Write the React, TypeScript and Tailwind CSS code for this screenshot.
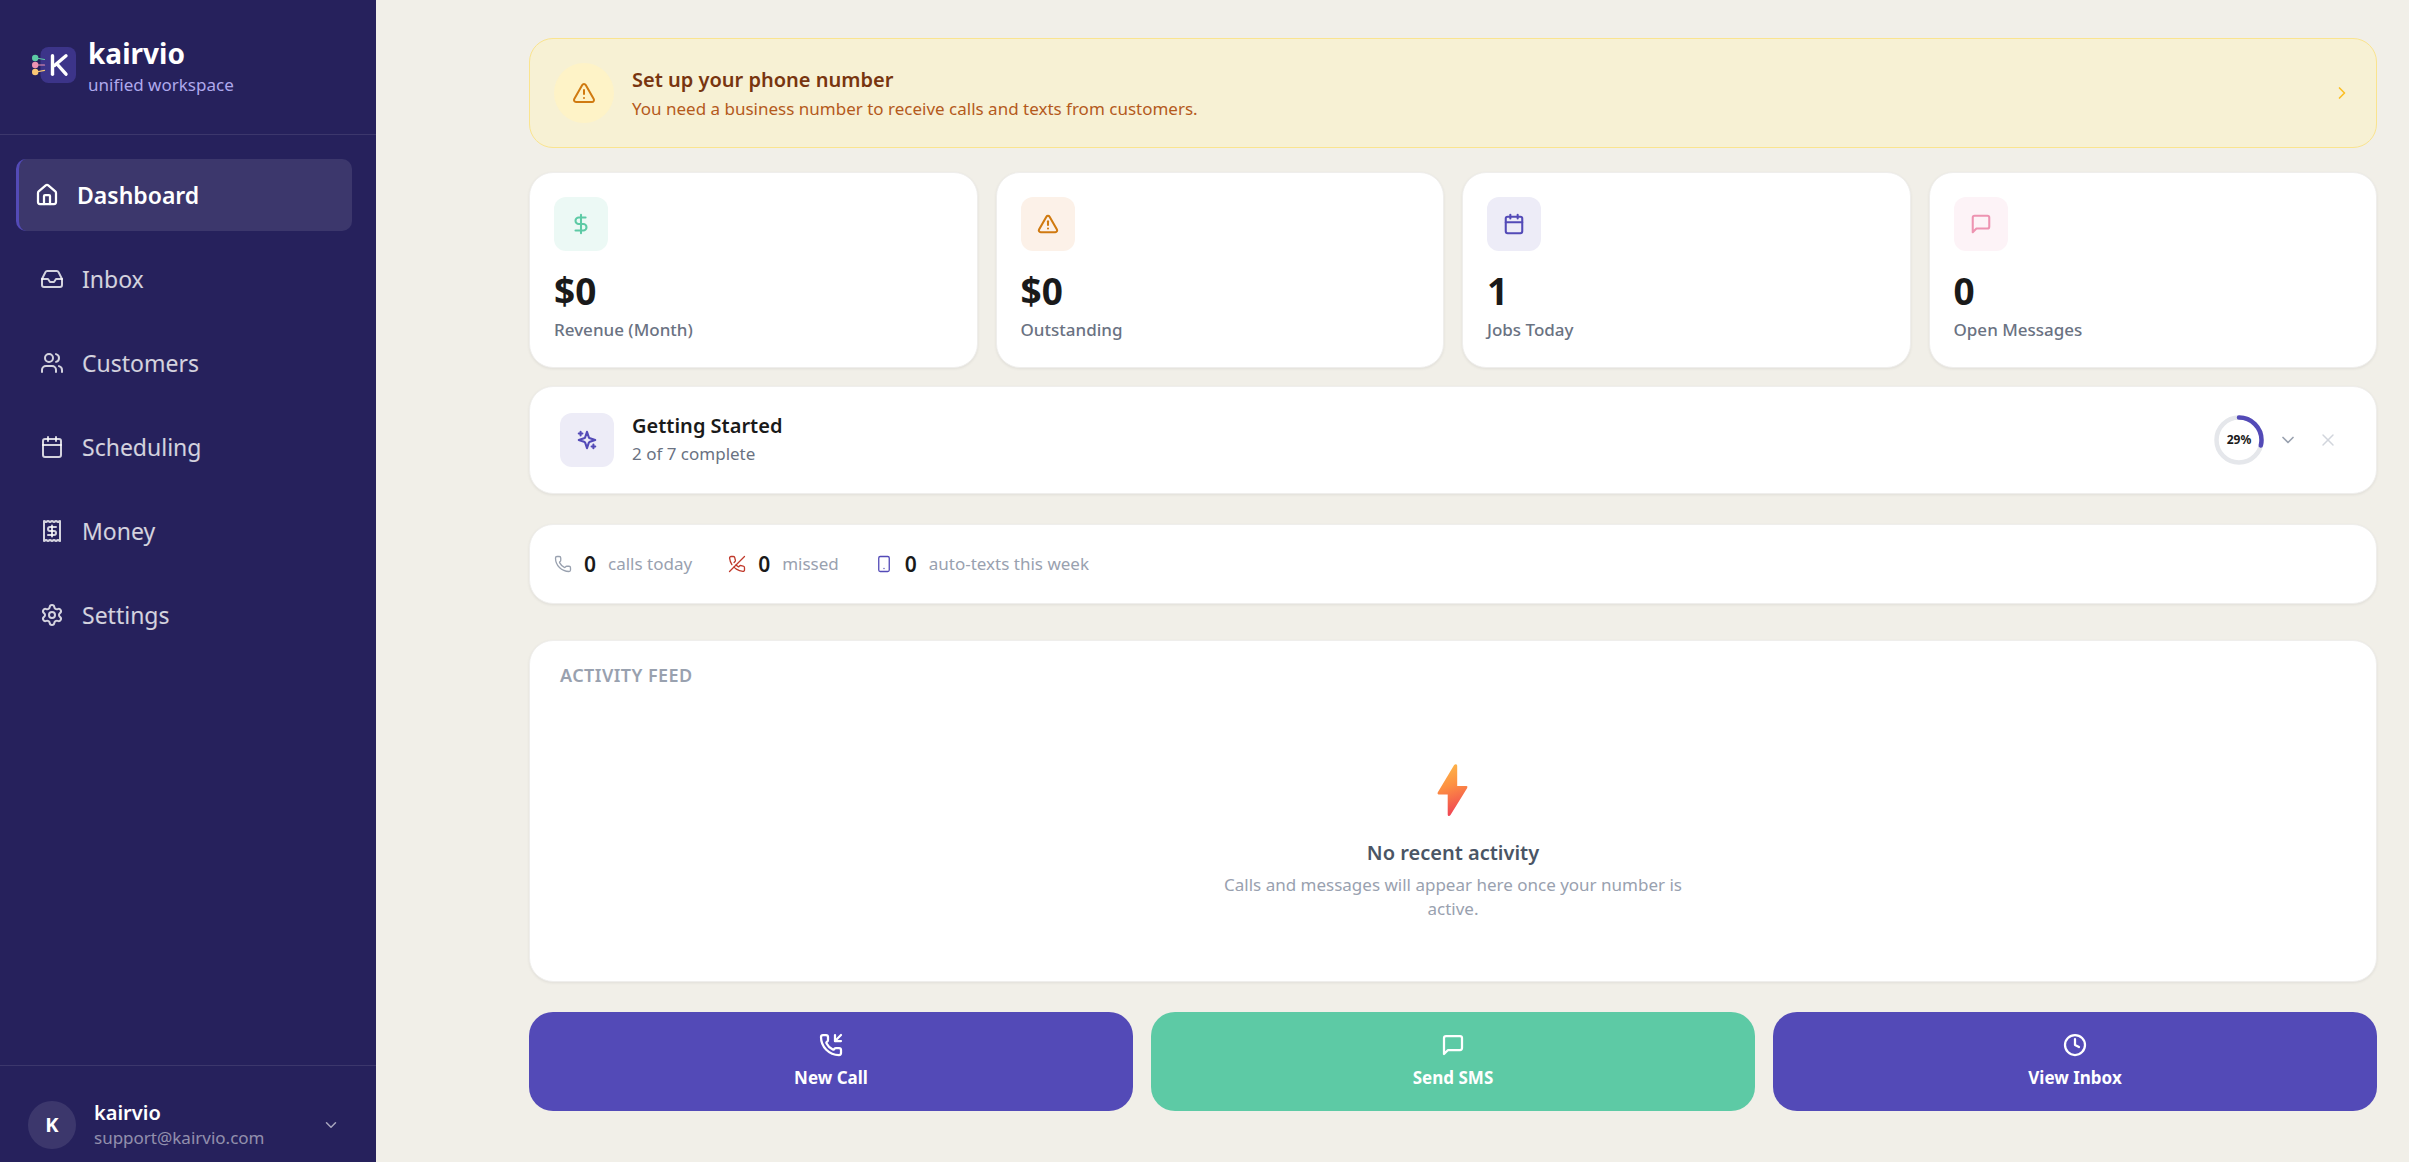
import type { ReactNode } from 'react';
import {
  Calendar,
  ChevronDown,
  ChevronRight,
  Clock,
  DollarSign,
  House,
  Inbox,
  Phone,
  PhoneIncoming,
  Settings,
  Smartphone,
  TriangleAlert,
  Users,
  X,
} from 'lucide-react';

const CARD = 'rounded-3xl border border-[#efeeec] bg-white shadow-[0_1px_3px_rgba(0,0,0,0.07)]';

type IconProps = { size?: number; strokeWidth?: number; className?: string };

function LineIcon({ size = 24, strokeWidth = 2, className, children }: IconProps & { children: ReactNode }) {
  return (
    <svg
      className={className}
      width={size}
      height={size}
      viewBox="0 0 24 24"
      fill="none"
      stroke="currentColor"
      strokeWidth={strokeWidth}
      strokeLinejoin="round"
      strokeLinecap="round"
      aria-hidden="true"
    >
      {children}
    </svg>
  );
}

function ReceiptIcon(props: IconProps) {
  return (
    <LineIcon {...props}>
      <path d="M4 2v20l2-1 2 1 2-1 2 1 2-1 2 1 2-1 2 1V2l-2 1-2-1-2 1-2-1-2 1-2-1-2 1Z" />
      <path d="M16 8h-6a2 2 0 1 0 0 4h4a2 2 0 1 1 0 4H8" />
      <path d="M12 17.5v-11" />
    </LineIcon>
  );
}

function MessageIcon(props: IconProps) {
  return (
    <LineIcon {...props}>
      <path d="M21 15a2 2 0 0 1-2 2H7l-4 4V5a2 2 0 0 1 2-2h14a2 2 0 0 1 2 2z" />
    </LineIcon>
  );
}

function SparklesIcon(props: IconProps) {
  return (
    <LineIcon {...props}>
      <path d="m12 3-1.912 5.813a2 2 0 0 1-1.275 1.275L3 12l5.813 1.912a2 2 0 0 1 1.275 1.275L12 21l1.912-5.813a2 2 0 0 1 1.275-1.275L21 12l-5.813-1.912a2 2 0 0 1-1.275-1.275L12 3Z" />
      <path d="M5 3v4M19 17v4M3 5h4M17 19h4" />
    </LineIcon>
  );
}

function MissedCallIcon(props: IconProps) {
  return (
    <LineIcon {...props}>
      <path d="M10.68 13.31a16 16 0 0 0 3.41 2.6l1.27-1.27a2 2 0 0 1 2.11-.45 12.84 12.84 0 0 0 2.81.7 2 2 0 0 1 1.72 2v3a2 2 0 0 1-2.18 2 19.79 19.79 0 0 1-8.63-3.07 19.42 19.42 0 0 1-3.33-2.67m-2.67-3.34a19.79 19.79 0 0 1-3.07-8.63A2 2 0 0 1 4.11 2h3a2 2 0 0 1 2 1.72 12.84 12.84 0 0 0 .7 2.81 2 2 0 0 1-.45 2.11L8.09 9.91" />
      <path d="M22 2L2 22" />
    </LineIcon>
  );
}

function Logo() {
  return (
    <svg className="h-9 w-11 shrink-0" viewBox="0 0 44 36" fill="none" aria-hidden="true">
      <rect x="8.500" width="35.500" height="36" rx="8" fill="#3C3489" />
      <g strokeWidth="1.200" strokeLinecap="round">
        <path d="M4 11l8.500 1.500" stroke="#5DCAA5" />
        <path d="M4 18h8.500" stroke="#ED93B1" />
        <path d="M4 25l8.500-1.700" stroke="#FAC775" />
      </g>
      <circle cx="3.200" cy="11" r="3.200" fill="#5DCAA5" />
      <circle cx="3.200" cy="18" r="3.200" fill="#ED93B1" />
      <circle cx="3.200" cy="25" r="3.200" fill="#FAC775" />
      <g stroke="#fff" strokeWidth="3.400" strokeLinecap="round">
        <path d="M20.500 8.800v18.400" />
        <path d="M34 8.800L22.500 18.500" />
        <path d="M25 17l9 10.200" />
      </g>
    </svg>
  );
}

function Bolt() {
  return (
    <svg className="h-[54px] w-8" viewBox="0 0 32 54" aria-hidden="true">
      <defs>
        <linearGradient id="bolt" x1="0.400" y1="0" x2="0.600" y2="1">
          <stop offset="0" stopColor="#FDB54A" />
          <stop offset="0.400" stopColor="#FD9042" />
          <stop offset="1" stopColor="#EF3F55" />
        </linearGradient>
      </defs>
      <path
        fill="url(#bolt)"
        d="M17 2.200Q18 1 19 1.200Q20.200 1.400 20.200 2.800V23H29.500Q31 23.200 30.200 24.900L13.500 52Q12.700 53.100 11.500 52.900Q10.700 52.700 10.700 51.400V31.400H1.500Q0 31 .700 29.400Z"
      />
    </svg>
  );
}

function ProgressRing({ value }: { value: number }) {
  return (
    <div className="relative flex size-[54px] items-center justify-center">
      <svg className="absolute inset-0 size-full -rotate-90" viewBox="0 0 54 54" fill="none" aria-hidden="true">
        <circle cx="27" cy="27" r="22.500" stroke="#e5e7eb" strokeWidth="4.500" />
        <circle
          cx="27"
          cy="27"
          r="22.500"
          stroke="#534AB7"
          strokeWidth="4.500"
          strokeLinecap="round"
          pathLength={100}
          strokeDasharray={`${value} 200`}
        />
      </svg>
      <span className="text-xs font-bold text-[#1a1a1a]">{value}%</span>
    </div>
  );
}

const navItems: { label: string; icon: ReactNode }[] = [
  { label: 'Inbox', icon: <Inbox size={24} /> },
  { label: 'Customers', icon: <Users size={24} /> },
  { label: 'Scheduling', icon: <Calendar size={24} /> },
  { label: 'Money', icon: <ReceiptIcon size={24} /> },
  { label: 'Settings', icon: <Settings size={24} /> },
];

function Sidebar() {
  return (
    <aside className="flex w-[376px] shrink-0 flex-col bg-[#26215C] text-white">
      <div className="flex h-[135px] items-center gap-3 border-b border-white/10 px-8 pb-1">
        <Logo />
        <div className="pt-1">
          <div className="text-[28px] leading-9 font-bold">kairvio</div>
          <div className="text-[17px] leading-7 text-[#AFA9EC]">unified workspace</div>
        </div>
      </div>
      <nav className="flex flex-1 flex-col gap-3 pt-6 pr-6 pl-4" aria-label="Main">
        <a
          href="#dashboard"
          aria-current="page"
          className="flex h-[72px] items-center gap-[18px] rounded-[10px] border-l-[3px] border-[#534AB7] bg-white/10 px-4 text-[23px] font-semibold"
        >
          <House size={24} strokeWidth={2.25} />
          Dashboard
        </a>
        {navItems.map(({ label, icon }) => (
          <a
            key={label}
            href={`#${label.toLowerCase()}`}
            className="flex h-[72px] items-center gap-[18px] rounded-[10px] px-6 text-[23px] text-white/80"
          >
            {icon}
            {label}
          </a>
        ))}
      </nav>
      <div className="border-t border-white/10 pt-[34px] pb-3">
        <button type="button" className="flex w-full items-center gap-[18px] pr-9 pl-7 text-left">
          <span className="flex size-12 items-center justify-center rounded-full bg-white/10 text-xl font-bold">K</span>
          <span className="flex min-w-0 flex-1 flex-col">
            <span className="text-xl leading-[26px] font-semibold">kairvio</span>
            <span className="text-[17px] leading-6 text-white/50">support@kairvio.com</span>
          </span>
          <ChevronDown size={18} className="text-white/60" />
        </button>
      </div>
    </aside>
  );
}

function StatCard({ icon, tint, value, label }: { icon: ReactNode; tint: string; value: string; label: string }) {
  return (
    <div className={`${CARD} p-6`}>
      <div className={`flex size-[54px] items-center justify-center rounded-xl ${tint}`}>{icon}</div>
      <div className="mt-4 text-[37px] leading-[48px] font-bold text-[#1a1a1a]">{value}</div>
      <div className="pt-0.5 text-[17px] leading-[26px] font-medium text-gray-500">{label}</div>
    </div>
  );
}

function CallStat({ icon, value, label }: { icon: ReactNode; value: string; label: string }) {
  return (
    <div className="flex items-center gap-3">
      {icon}
      <span className="text-[21px] leading-7 font-semibold text-[#1a1a1a]">{value}</span>
      <span className="text-[17px] leading-7 text-gray-400">{label}</span>
    </div>
  );
}

function ActionButton({ icon, color, label }: { icon: ReactNode; color: string; label: string }) {
  return (
    <button
      type="button"
      className={`flex flex-col items-center gap-2 rounded-3xl pt-[21px] pb-5 text-[17px] leading-[26px] font-bold text-white ${color}`}
    >
      {icon}
      {label}
    </button>
  );
}

export default function App() {
  return (
    <div className="flex min-h-screen bg-[#F1EFE8] font-['Noto_Sans',sans-serif]">
      <Sidebar />
      <main className="flex min-w-0 flex-1 flex-col pt-[38px] pr-8 pl-[153px]">
        <a
          href="#phone-setup"
          className="flex items-center gap-[18px] rounded-3xl border border-[#fae48f] bg-[#F7F1D4] p-6"
        >
          <span className="flex size-[60px] items-center justify-center rounded-full bg-[#fef3c7]">
            <TriangleAlert size={24} className="text-[#d07a10]" />
          </span>
          <span className="flex flex-1 flex-col pt-0.5">
            <span className="text-xl leading-[30px] font-semibold text-[#78350f]">Set up your phone number</span>
            <span className="text-[17px] leading-7 text-[#b45a1c]">
              You need a business number to receive calls and texts from customers.
            </span>
          </span>
          <ChevronRight size={20} className="text-[#fbbf24]" />
        </a>

        <section className="mt-6 grid grid-cols-4 gap-[18px]" aria-label="Summary">
          <StatCard
            icon={<DollarSign size={22} strokeWidth={2.25} />}
            tint="bg-[#ECF9F5] text-[#5DCAA5]"
            value="$0"
            label="Revenue (Month)"
          />
          <StatCard
            icon={<TriangleAlert size={22} strokeWidth={2.25} />}
            tint="bg-[#FCF1E8] text-[#D07A10]"
            value="$0"
            label="Outstanding"
          />
          <StatCard
            icon={<Calendar size={22} strokeWidth={2.25} />}
            tint="bg-[#EDECF7] text-[#534AB7]"
            value="1"
            label="Jobs Today"
          />
          <StatCard
            icon={<MessageIcon size={22} strokeWidth={2.25} />}
            tint="bg-[#FDF3F7] text-[#ED93B1]"
            value="0"
            label="Open Messages"
          />
        </section>

        <section className={`${CARD} mt-[18px] flex items-center gap-[18px] py-[25px] pr-[38px] pl-[30px]`}>
          <div className="flex size-[54px] items-center justify-center rounded-xl bg-[#EDECF7] text-[#534AB7]">
            <SparklesIcon size={22} strokeWidth={2.25} />
          </div>
          <div className="flex-1">
            <h2 className="text-xl leading-7 font-semibold text-[#1a1a1a]">Getting Started</h2>
            <p className="text-[17px] leading-7 text-gray-500">2 of 7 complete</p>
          </div>
          <div className="flex items-center gap-3">
            <ProgressRing value={29} />
            <button type="button" aria-label="Expand checklist">
              <ChevronDown size={20} className="text-gray-400" />
            </button>
            <button type="button" aria-label="Dismiss checklist" className="ml-2">
              <X size={20} strokeWidth={1.75} className="text-gray-300" />
            </button>
          </div>
        </section>

        <section className={`${CARD} mt-[30px] flex items-center gap-9 px-6 py-[25px]`} aria-label="Call summary">
          <CallStat
            icon={<Phone size={18} strokeWidth={1.75} className="text-gray-400" />}
            value="0"
            label="calls today"
          />
          <CallStat
            icon={<MissedCallIcon size={18} strokeWidth={1.75} className="text-[#c0392b]" />}
            value="0"
            label="missed"
          />
          <CallStat
            icon={<Smartphone size={18} strokeWidth={1.75} className="text-[#534AB7]" />}
            value="0"
            label="auto-texts this week"
          />
        </section>

        <section className={`${CARD} mt-9 px-[30px] pt-5 pb-[60px]`}>
          <h2 className="text-lg leading-7 font-semibold tracking-wide text-gray-400">ACTIVITY FEED</h2>
          <div className="flex flex-col items-center pt-[74px] text-center">
            <Bolt />
            <h3 className="mt-5 text-xl leading-8 font-semibold text-gray-600">No recent activity</h3>
            <p className="mt-1 w-[480px] text-[17px] leading-6 text-gray-400">
              Calls and messages will appear here once your number is active.
            </p>
          </div>
        </section>

        <section className="mt-[30px] grid grid-cols-3 gap-[18px]" aria-label="Quick actions">
          <ActionButton icon={<PhoneIncoming size={24} strokeWidth={2.25} />} color="bg-[#534AB7]" label="New Call" />
          <ActionButton icon={<MessageIcon size={24} strokeWidth={2.25} />} color="bg-[#5DCAA5]" label="Send SMS" />
          <ActionButton icon={<Clock size={24} strokeWidth={2.25} />} color="bg-[#534AB7]" label="View Inbox" />
        </section>
      </main>
    </div>
  );
}
